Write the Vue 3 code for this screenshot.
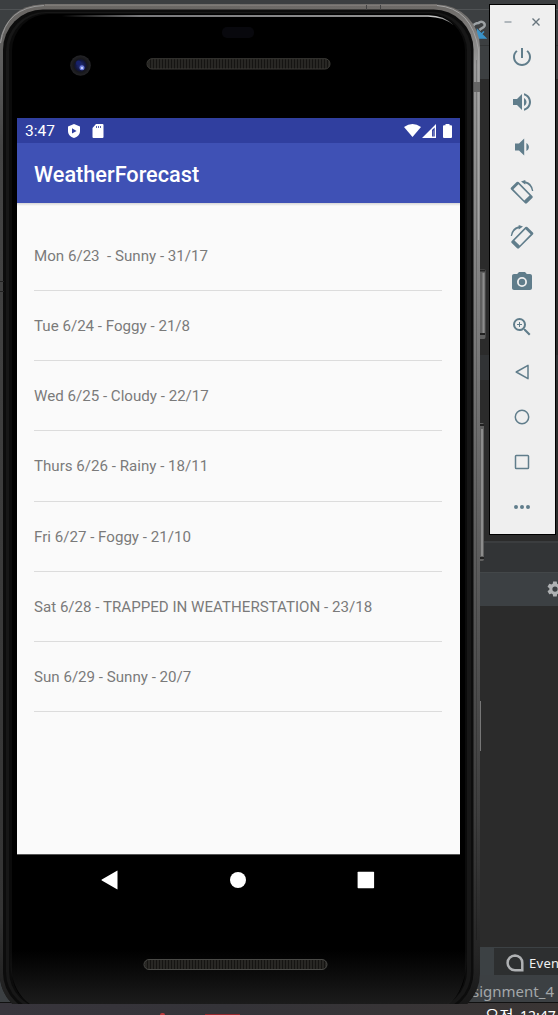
<script setup>
const days = [
  'Mon 6/23\u00a0 - Sunny - 31/17',
  'Tue 6/24 - Foggy - 21/8',
  'Wed 6/25 - Cloudy - 22/17',
  'Thurs 6/26 - Rainy - 18/11',
  'Fri 6/27 - Foggy - 21/10',
  'Sat 6/28 - TRAPPED IN WEATHERSTATION - 23/18',
  'Sun 6/29 - Sunny - 20/7',
]

const speaker = 'M3 9v6h4l5 5V4L7 9H3zm13.500 3c0-1.770-1.020-3.290-2.500-4.030v8.050c1.480-.730 2.500-2.250 2.500-4.020z'
const tools = [
  { name: 'Power', fill: 'M13 3h-2v10h2V3zm4.830 2.170l-1.420 1.420C17.990 7.860 19 9.810 19 12c0 3.870-3.130 7-7 7s-7-3.130-7-7c0-2.190 1.010-4.140 2.580-5.420L6.170 5.170C4.230 6.820 3 9.260 3 12c0 4.970 4.030 9 9 9s9-4.030 9-9c0-2.740-1.230-5.180-3.170-6.830z' },
  { name: 'Volume up', fill: speaker + 'M14 3.230v2.060c2.890.860 5 3.540 5 6.710s-2.110 5.850-5 6.710v2.060c4.010-.910 7-4.490 7-8.770s-2.990-7.860-7-8.770z' },
  { name: 'Volume down', fill: 'M18.900 12c0-1.770-1.020-3.290-2.500-4.030v8.050c1.480-.730 2.500-2.250 2.500-4.020zM5 8.600v6.800h4l5.200 5V3.600L9 8.600H5z' },
  { name: 'Rotate left', rotate: true },
  { name: 'Rotate right', rotate: true, mirror: true },
  { name: 'Screenshot', fill: 'M9 2L7.170 4H4c-1.100 0-2 .900-2 2v12c0 1.100.900 2 2 2h16c1.100 0 2-.900 2-2V6c0-1.100-.900-2-2-2h-3.170L15 2H9zm3 15a5 5 0 1 1 0-10 5 5 0 0 1 0 10zm0-1.800a3.200 3.200 0 1 0 0-6.400 3.200 3.200 0 0 0 0 6.400z' },
  { name: 'Zoom', fill: 'M15.500 14h-.790l-.280-.270A6.471 6.471 0 0 0 16 9.500 6.500 6.500 0 1 0 9.500 16c1.610 0 3.090-.590 4.230-1.570l.270.280v.790l5 4.990L20.490 19l-4.990-5zm-6 0C7.010 14 5 11.990 5 9.500S7.010 5 9.500 5 14 7.010 14 9.500 11.990 14 9.500 14zM12 10h-2v2H9v-2H7V9h2V7h1v2h2v1z' },
  { name: 'Back', line: 'M18 5.300v13.400L6.200 12z' },
  { name: 'Home', line: 'M12 5.300a6.700 6.700 0 1 1 0 13.400a6.700 6.700 0 0 1 0-13.400z' },
  { name: 'Overview', line: 'M6.300 5.500h11.400q.800 0 .800.800v11.400q0 .800-.800.800H6.300q-.800 0-.800-.800V6.300q0-.800.800-.800z' },
  { name: 'More', fill: 'M6 10a2 2 0 1 0 0 4a2 2 0 0 0 0-4zM12 10a2 2 0 1 0 0 4a2 2 0 0 0 0-4zM18 10a2 2 0 1 0 0 4a2 2 0 0 0 0-4z' },
]
</script>

<template>
  <div class="desktop">
    <div class="ide">
      <div class="ide-top"></div>
      <div class="ide-editor"></div>
      <div class="ide-strip"></div>
      <div class="ide-panel-head">
        <svg class="gear" viewBox="0 0 24 24"><path d="M19.400 13c0-.300.100-.600.100-1s0-.700-.100-1l2.100-1.600c.200-.200.200-.400.100-.600l-2-3.500c-.100-.200-.400-.300-.600-.200l-2.500 1c-.500-.400-1.100-.700-1.700-1l-.400-2.600c0-.300-.200-.500-.500-.500h-4c-.300 0-.500.200-.500.400l-.400 2.700c-.600.200-1.200.600-1.700 1L4.800 5.100c-.200-.100-.500 0-.600.200l-2 3.500c-.100.200-.100.500.100.600L4.500 11a8 8 0 0 0 0 2l-2.200 1.600c-.200.200-.200.400-.100.600l2 3.500c.100.200.400.300.600.200l2.500-1c.500.400 1.100.700 1.700 1l.400 2.600c0 .300.200.500.500.500h4c.300 0 .500-.200.500-.400l.400-2.700c.600-.200 1.200-.600 1.700-1l2.500 1c.200.100.500 0 .600-.200l2-3.500c.100-.200.100-.500-.100-.600zM12 15.500a3.500 3.500 0 1 1 0-7 3.500 3.500 0 0 1 0 7z" /></svg>
      </div>
      <div class="ide-panel"></div>
      <div class="ide-tabs">
        <div class="event-tab">
          <svg class="bubble" viewBox="0 0 18 18"><path d="M9 1.500A7.400 7.400 0 1 0 9 16.300H16.300V9A7.400 7.400 0 0 0 9 1.500z" /></svg>
          <span>Event Log</span>
        </div>
      </div>
      <div class="ide-status"><span>Assignment_4</span></div>
      <div class="taskbar"><i class="red-dot"></i><i class="red-bar"></i><span>오전</span><span>12:47</span></div>
    </div>

    <svg class="sync" viewBox="0 0 18 22">
      <path d="M3 8C5 5 7 4 9.500 4c3-3 7 0 6 3-1 2-3 2-5 4" fill="none" stroke="#9da2a5" stroke-width="2.500" />
      <path d="M15 12.500l-5 5M8.500 11v8h8z" fill="#3b93c9" stroke="#3b93c9" stroke-width="1.500" />
    </svg>

    <div class="phone">
      <svg class="shell" viewBox="0 0 486 1004">
        <defs>
          <linearGradient id="metal" x1="0" y1="0" x2="0" y2="1">
            <stop offset="0" stop-color="#6b6865" />
            <stop offset=".06" stop-color="#9a9a9a" />
            <stop offset=".27" stop-color="#828282" />
            <stop offset=".55" stop-color="#5c5c5c" />
            <stop offset=".8" stop-color="#3e3e3e" />
            <stop offset=".94" stop-color="#252525" />
            <stop offset="1" stop-color="#141414" />
          </linearGradient>
          <linearGradient id="metalLeft" x1="0" y1="0" x2="0" y2="1">
            <stop offset="0" stop-color="#6b6865" />
            <stop offset=".06" stop-color="#5c5c5c" />
            <stop offset=".14" stop-color="#444" />
            <stop offset=".9" stop-color="#343434" />
            <stop offset="1" stop-color="#1a1a1a" />
          </linearGradient>
          <linearGradient id="shine" x1="0" y1="0" x2="1" y2="0">
            <stop offset="0" stop-color="#b0b0b0" stop-opacity="0" />
            <stop offset=".2" stop-color="#a0a0a4" />
            <stop offset=".95" stop-color="#c6c6c6" />
            <stop offset="1" stop-color="#777" />
          </linearGradient>
          <linearGradient id="chin" x1="0" y1="0" x2="0" y2="1">
            <stop offset="0" stop-color="#1c1c1c" stop-opacity="0" />
            <stop offset="1" stop-color="#1f1f1f" />
          </linearGradient>
          <pattern id="mesh" width="3" height="10" patternUnits="userSpaceOnUse">
            <rect width="3" height="10" fill="#282724" /><rect width="1" height="10" fill="#151412" />
          </pattern>
          <radialGradient id="lens">
            <stop offset="0" stop-color="#25307e" /><stop offset=".5" stop-color="#11153d" />
            <stop offset=".65" stop-color="#17171b" /><stop offset="1" stop-color="#242427" />
          </radialGradient>
        </defs>
        <path d="M480 269h4q1.500 0 1.500 2v66q0 2-1.500 2h-4z" fill="#606060" />
        <path d="M483.500 273v60" stroke="#8c8c8c" stroke-width="2" />
        <path d="M480 270.500h5M480 334h5" stroke="#222" stroke-width="2" />
        <path d="M480 423h2.500q1.500 0 1.500 2v134q0 2-1.500 2h-2.500z" fill="#606060" />
        <path d="M482 429v127" stroke="#8c8c8c" stroke-width="2" />
        <path d="M480 425h4M480 558h4" stroke="#222" stroke-width="2" />
        <path d="M480.500 701v50" stroke="#777" stroke-width="1" />
        <rect x="-.5" y="4.500" width="480.500" height="1012" rx="43" fill="url(#metal)" />
        <path d="M240 4.500H42.500Q5 5-.5 47V970q0 40 43 46H240z" fill="url(#metalLeft)" />
        <path d="M45 5H437" stroke="#8f8b87" />
        <path d="M44 5.500Q6 7 .5 43" fill="none" stroke="#989898" stroke-width="1" />
        <path d="M437 5.500Q472 8 478.500 50V240" fill="none" stroke="#a4a4a4" stroke-width="1" />
        <rect x="3" y="9.500" width="470.500" height="1003" rx="40" fill="#0c0c0c" />
        <rect x="6" y="12" width="465" height="999" rx="39" fill="#171717" />
        <rect x="9" y="13" width="458" height="996" rx="38" fill="#0b0b0b" />
        <rect x="12" y="14" width="453" height="995" rx="37" fill="#000" />
        <path d="M10 965V950H467V960Q463 1004 436 1010H46Q15 1005 10 965z" fill="url(#chin)" />
        <path d="M476.500 60V940" stroke="#000" stroke-opacity=".2" />
        <path d="M62 15.200H428Q444 15 454 25.500Q444 17 428 16.700H62z" fill="url(#shine)" />
        <path d="M0 281.500h4M0 291.500h4" stroke="#222" />
        <path d="M474 82h6v10h-6z" fill="#666" />
        <path d="M366.500 5v5M380.500 5v5" stroke="#444" />
        <rect x="222" y="27" width="32" height="11" rx="5" fill="#08080d" />
        <circle cx="80.500" cy="65.500" r="10.300" fill="url(#lens)" />
        <circle cx="78.500" cy="63" r="2.500" fill="#18226b" />
        <circle cx="82" cy="67.700" r="2.500" fill="#6a79d8" />
        <circle cx="82" cy="67.900" r="1.200" fill="#c3cdff" />
        <rect x="147" y="58.700" width="183" height="10.300" rx="5" fill="url(#mesh)" stroke="#3c3b37" />
        <rect x="144" y="959.500" width="183" height="10" rx="5" fill="url(#mesh)" stroke="#494946" />
      </svg>

      <div class="screen">
        <div class="statusbar">
          <span class="clock">3:47</span>
          <svg class="shield" viewBox="0 0 12 14"><path fill-rule="evenodd" d="M6 0l6 2.400V7c0 3.500-2.500 6-6 7-3.500-1-6-3.500-6-7V2.400zM4 4.200v5.400L8.600 7z" /></svg>
          <svg class="card" viewBox="0 0 12 14"><path fill-rule="evenodd" d="M4 0h6.500Q11.500 0 11.500 1v12q0 1-1 1h-9q-1 0-1-1V4zM4.200 2v2h.800V2zM6.200 2v2h.800V2zM8.200 2v2h.800V2z" /></svg>
          <span class="spacer"></span>
          <svg class="wifi" viewBox="0 0 17 13"><path d="M0 3Q8.500-3 17 3L8.500 13z" /></svg>
          <svg class="signal" viewBox="0 0 14 14"><path fill-rule="evenodd" d="M14 0v14H0zM10 6v6.500h2.700V3.500z" /><path d="M10.800 6.500h1v6h-1z" opacity=".35" /></svg>
          <svg class="battery" viewBox="0 0 9 14"><path d="M2.500 0h4v1.300H8q1 0 1 1V13q0 1-1 1H1q-1 0-1-1V2.300q0-1 1-1h1.500z" /></svg>
        </div>
        <div class="appbar">WeatherForecast</div>
        <div class="list">
          <div v-for="day in days" :key="day" class="row">{{ day }}</div>
        </div>
        <div class="navbar">
          <svg viewBox="0 0 20 20"><path d="M17.500.900v18.200Q17.500 19.700 17 19.300L1.800 10.500Q1 10 1.800 9.500L17 .700Q17.500.400 17.500.900z" /></svg>
          <svg viewBox="0 0 20 20"><circle cx="10" cy="10" r="8" /></svg>
          <svg viewBox="0 0 20 20"><rect x="1.600" y="1.700" width="16.500" height="16.500" rx=".7" /></svg>
        </div>
      </div>
    </div>

    <div class="toolbar">
      <div class="window-buttons">
        <svg viewBox="0 0 10 10"><path d="M1.500 5h7" stroke="#85919a" stroke-width="1.200" /></svg>
        <svg viewBox="0 0 10 10"><path d="M1.500 1.500l7 7m0-7l-7 7" stroke="#68757d" stroke-width="1.400" /></svg>
      </div>
      <div v-for="tool in tools" :key="tool.name" class="tool">
        <svg viewBox="0 0 24 24" :class="{ mirror: tool.mirror }">
          <template v-if="tool.rotate">
            <path fill-rule="evenodd" d="M6.700 2.100Q7.700 1.200 8.600 2.100L22.300 16.100Q23.200 17 22.300 18L16.900 23.200Q15.900 24.100 15 23.200L1.100 9.400Q.200 8.500 1.100 7.500zM8.500 4.300L3.400 9.300L14.300 20.400L19.500 15.500z" />
            <path d="M11 1.500L15.300 0V1.200Q22.500 2.700 23.300 11H22Q21 5.200 15.500 3.200L15.200 4.400z" />
          </template>
          <path v-else-if="tool.fill" :d="tool.fill" />
          <path v-else :d="tool.line" class="line" />
        </svg>
      </div>
    </div>
  </div>
</template>

<style>
body { margin: 0; overflow: hidden; }
</style>

<style scoped>
.desktop { position: relative; width: 558px; height: 1015px; overflow: hidden; background: #2b2b2b; font-family: "Noto Sans", "Noto Sans CJK KR", sans-serif; }
svg { display: block; flex: none; }

.ide { display: flex; flex-direction: column; height: 1015px; }
.ide-top { height: 79px; box-sizing: border-box; background: linear-gradient(#505355, #505355) 0 9px / 100% 1px no-repeat, linear-gradient(#323435, #323435) 0 45px / 100% 1px no-repeat, #3c3f41; }
.ide-editor { height: 462px; background: linear-gradient(#313335, #313335) 0 276px / 100% 25px no-repeat, #2b2b2b; }
.ide-strip { height: 32px; box-sizing: border-box; background: #323436; border-top: 2px solid #3b3d3f; border-bottom: 1px solid #434749; }
.ide-panel-head { display: flex; align-items: center; height: 33px; padding-left: 546px; background: #3c4043; }
.gear { width: 18px; height: 18px; margin-top: -2px; fill: #afb1b3; }
.ide-panel { flex: 1; }
.ide-tabs { display: flex; height: 28px; padding-left: 494px; background: #3c4144; }
.event-tab { display: flex; align-items: center; gap: 5px; width: 64px; height: 27px; box-sizing: border-box; margin-top: 1px; padding: 2px 0 0 12px; background: #2d2f30; color: #f0f0f0; font-size: 13px; letter-spacing: .3px; white-space: nowrap; }
.bubble { width: 18px; height: 18px; fill: none; stroke: #afb1b3; stroke-width: 2.500px; }
.ide-status { display: flex; justify-content: flex-end; align-items: center; height: 28px; padding: 4px 4px 0 0; box-sizing: border-box; background: #3c4043; border-bottom: 1px solid #111; color: #a3a7a9; font-size: 15px; }
.taskbar { display: flex; height: 12px; box-sizing: border-box; padding: 3px 0 0 160px; overflow: hidden; background: linear-gradient(90deg, #38353c, #343338 40%, #3a3534); color: #fff; font-size: 14px; line-height: 20px; white-space: nowrap; }
.taskbar span:nth-of-type(1) { margin-left: 245px; width: 35px; font-size: 15.500px; }
.red-dot { width: 5px; height: 2px; margin: 7px 40px 0 0; border-radius: 2px 2px 0 0; background: #bd3b3d; }
.red-bar { width: 35px; height: 1px; margin-top: 8px; background: #98272d; }

.sync { position: absolute; left: 469px; top: 19px; width: 18px; height: 22px; }

.phone { position: absolute; left: 0; top: 0; width: 486px; height: 1004px; overflow: hidden; box-sizing: border-box; padding: 118px 26px 0 17px; }
.shell { position: absolute; left: 0; top: 0; width: 486px; height: 1004px; }
.screen { position: relative; display: flex; flex-direction: column; width: 443px; height: 787px; font-family: Roboto, sans-serif; }
.statusbar { display: flex; align-items: center; height: 25px; box-sizing: border-box; padding: 0 8.500px 0 8px; background: #303f9f; color: #fff; }
.statusbar svg { fill: #fff; }
.clock { width: 43px; padding-top: 1px; font-size: 15.500px; line-height: 25px; }
.shield { width: 12px; height: 14px; }
.card { width: 12px; height: 14px; margin-left: 12px; }
.spacer { flex: 1; }
.wifi { width: 17px; height: 13px; }
.signal { width: 14px; height: 14px; margin-left: 1px; }
.battery { width: 9px; height: 14px; margin-left: 7px; }
.appbar { height: 60px; box-sizing: border-box; padding: 2px 17px 0; line-height: 60px; background: #3f51b5; color: #fff; font-size: 21.700px; font-weight: 500; }
.list { flex: 1; padding: 17.800px 18px 0 17px; background: linear-gradient(#d5d5d5, #fafafa 3px); border-bottom: 1px solid #555; }
.row { height: 70.200px; box-sizing: border-box; border-bottom: 1px solid #dcdcdc; color: #7a7a7a; font-size: 15.120px; line-height: 71px; white-space: nowrap; }
.navbar { display: flex; align-items: center; justify-content: space-between; height: 50px; padding: 0 84px 0 83px; }
.navbar svg { width: 20px; height: 20px; fill: #fff; }

.toolbar { position: absolute; left: 489px; top: 4px; width: 67px; height: 531px; box-sizing: border-box; border: 1px solid #000; background: #efefef; display: flex; flex-direction: column; }
.window-buttons { display: flex; align-items: center; gap: 18px; height: 30px; box-sizing: border-box; margin-bottom: -1px; padding: 4px 0 0 13px; }
.window-buttons svg { width: 10px; height: 10px; }
.tool { display: flex; align-items: center; height: 45px; padding-left: 20px; }
.tool svg { width: 24px; height: 24px; fill: #607d8b; }
.tool .line { fill: none; stroke: #607d8b; stroke-width: 1.500px; stroke-linejoin: round; }
.mirror { transform: scaleX(-1); }
</style>
